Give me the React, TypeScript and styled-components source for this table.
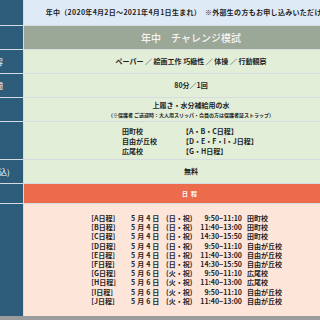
import { Fragment } from "react";
import styled, { createGlobalStyle } from "styled-components";

const GlobalStyle = createGlobalStyle`
  html, body {
    margin: 0;
    padding: 0;
    background: #ffffff;
    overflow: hidden;
  }
  body {
    font-family: "Noto Sans CJK JP", "Noto Sans", sans-serif;
  }
`;

const Table = styled.div`
  display: grid;
  grid-template-columns: 72px 334px;
  gap: 1px;
  width: 407px;
  margin-left: -49px;
  background: #d4dce2;
  border-bottom: 4px solid #9b9b9b;
`;

const Label = styled.div<{ $h: number }>`
  height: ${(p) => p.$h}px;
  background: #2d5d7b;
  color: #ffffff;
  font-size: 8px;
  display: flex;
  align-items: center;
  justify-content: center;
  white-space: nowrap;
`;

const Cell = styled.div<{ $h: number; $bg: string }>`
  height: ${(p) => p.$h}px;
  background: ${(p) => p.$bg};
  display: flex;
  flex-direction: column;
  align-items: center;
  justify-content: center;
  font-size: 7px;
  font-weight: 700;
  color: #1e1e1e;
  white-space: nowrap;
  line-height: 9px;
`;

const Target = styled.span`
  letter-spacing: 0.3px;
`;

const Title = styled.span`
  font-size: 10px;
  font-weight: 500;
  color: #f5f5f5;
`;

const Note = styled.span`
  font-size: 5px;
  line-height: 9px;
`;

const Heading = styled.span`
  color: #ffffff;
  font-size: 6px;
  letter-spacing: 3px;
`;

const Schools = styled.div`
  display: grid;
  grid-template-columns: 60px auto;
  line-height: 10px;
  align-self: flex-start;
  margin-left: 98px;
`;

const Schedule = styled.div`
  display: grid;
  grid-template-columns: 44px 35px 30px 51px auto;
  line-height: 9.2px;
  align-self: flex-start;
  margin-left: 63px;
`;

const Time = styled.span`
  text-align: right;
  padding-right: 5px;
`;

const Spaced = styled.span`
  letter-spacing: 2px;
`;

const schedule = [
  ["A", "5月4日", "(日・祝)", "9:50−11:10", "田町校"],
  ["B", "5月4日", "(日・祝)", "11:40−13:00", "田町校"],
  ["C", "5月4日", "(日・祝)", "14:30−15:50", "田町校"],
  ["D", "5月4日", "(日・祝)", "9:50−11:10", "自由が丘校"],
  ["E", "5月4日", "(日・祝)", "11:40−13:00", "自由が丘校"],
  ["F", "5月4日", "(日・祝)", "14:30−15:50", "自由が丘校"],
  ["G", "5月6日", "(火・祝)", "9:50−11:10", "広尾校"],
  ["H", "5月6日", "(火・祝)", "11:40−13:00", "広尾校"],
  ["I", "5月6日", "(火・祝)", "9:50−11:10", "自由が丘校"],
  ["J", "5月6日", "(火・祝)", "11:40−13:00", "自由が丘校"],
];

const blue = "#dfeaf7";
const sage = "#9ba797";
const green = "#e3eed9";
const orange = "#ec6b4b";
const peach = "#fde5da";

export default function App() {
  return (
    <>
      <GlobalStyle />
      <Table>
        <Label $h={25}>対象</Label>
        <Cell $h={25} $bg={blue}>
          <Target>年中（2020年4月2日～2021年4月1日生まれ）　※外部生の方もお申し込みいただけます</Target>
        </Cell>

        <Label $h={23}>模試名</Label>
        <Cell $h={23} $bg={sage}>
          <Title>年中　チャレンジ模試</Title>
        </Cell>

        <Label $h={23}>試験内容</Label>
        <Cell $h={23} $bg={green}>
          <span>ペーパー ／ 絵画工作 巧緻性 ／ 体操 ／ 行動観察</span>
        </Cell>

        <Label $h={23}>試験時間</Label>
        <Cell $h={23} $bg={green}>
          <span>80分／1回</span>
        </Cell>

        <Label $h={23}>持ち物</Label>
        <Cell $h={23} $bg={green}>
          <span>上履き・水分補給用の水</span>
          <Note>（※保護者 ご送迎時：大人用スリッパ・会員の方は保護者証ストラップ）</Note>
        </Cell>

        <Label $h={37}>会場</Label>
        <Cell $h={37} $bg={green}>
          <Schools>
            <span>田町校</span>
            <span>【A・B・C日程】</span>
            <span>自由が丘校</span>
            <span>【D・E・F・I・J日程】</span>
            <span>広尾校</span>
            <span>【G・H日程】</span>
          </Schools>
        </Cell>

        <Label $h={23}>受験料(税込)</Label>
        <Cell $h={23} $bg={green}>
          <span>無料</span>
        </Cell>

        <Label $h={19} />
        <Cell $h={19} $bg={orange}>
          <Heading>日程</Heading>
        </Cell>

        <Label $h={112} />
        <Cell $h={112} $bg={peach}>
          <Schedule>
            {schedule.map(([code, date, day, time, place]) => (
              <Fragment key={code}>
                <span>［{code}日程］</span>
                <Spaced>{date}</Spaced>
                <span>{day}</span>
                <Time>{time}</Time>
                <span>{place}</span>
              </Fragment>
            ))}
          </Schedule>
        </Cell>
      </Table>
    </>
  );
}
